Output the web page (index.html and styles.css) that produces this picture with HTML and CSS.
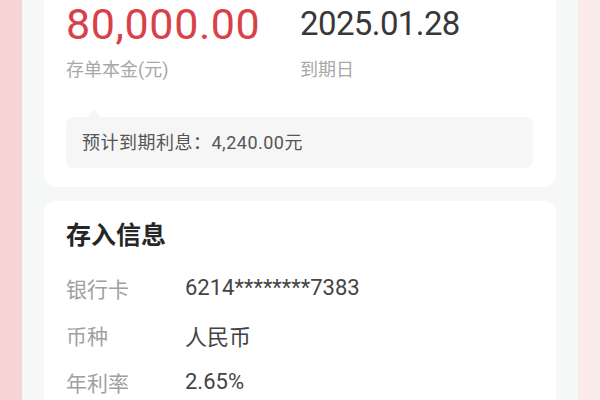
FILE: index.html
```html
<!DOCTYPE html>
<html lang="zh-CN">
<head>
<meta charset="utf-8">
<link rel="stylesheet" href="styles.css">
</head>
<body>
<div class="page">
  <div class="strip strip-left"></div>
  <main class="main">
    <section class="card card-summary">
      <div class="figures">
        <div class="fig fig-amount">
          <div class="amount">80,000.00</div>
          <div class="fig-label">存单本金(元)</div>
        </div>
        <div class="fig fig-date">
          <div class="date">2025.01.28</div>
          <div class="fig-label">到期日</div>
        </div>
      </div>
      <div class="interest">
        <span class="notch"></span>
        预计到期利息：4,240.00元
      </div>
    </section>
    <section class="card card-info">
      <h2 class="title">存入信息</h2>
      <div class="row"><span class="row-label">银行卡</span><span class="row-value">6214********7383</span></div>
      <div class="row"><span class="row-label">币种</span><span class="row-value">人民币</span></div>
      <div class="row"><span class="row-label">年利率</span><span class="row-value">2.65%</span></div>
    </section>
  </main>
  <div class="strip strip-right"></div>
</div>
</body>
</html>
```

FILE: styles.css
```css
* { box-sizing: border-box; }
html, body {
  margin: 0;
  padding: 0;
  width: 600px;
  height: 400px;
  overflow: hidden;
  font-family: Roboto, "Noto Sans CJK SC", sans-serif;
}
.page {
  display: flex;
  width: 600px;
  height: 400px;
}
.strip { width: 22px; flex: none; }
.strip-left { background: #f6d4d4; }
.strip-right { background: #fbeaea; }
.main {
  flex: 1;
  background: #f6f7f7;
  padding: 0 22px;
  display: flex;
  flex-direction: column;
  gap: 14px;
}
.card {
  background: #ffffff;
  border-radius: 12px;
  padding: 0 23px 0 22px;
}
.card-summary {
  margin-top: -12px;
  padding-top: 12px;
  padding-bottom: 19px;
}
.figures {
  display: flex;
}
.fig-amount { width: 234px; }
.amount {
  font-size: 43px;
  line-height: 48px;
  color: #d8414a;
  letter-spacing: 0.6px;
}
.date {
  font-size: 33px;
  line-height: 48px;
  color: #383838;
  letter-spacing: -0.6px;
}
.fig-label {
  margin-top: 10px;
  font-size: 18px;
  line-height: 24px;
  color: #a8a8a8;
}
.interest {
  position: relative;
  margin-top: 35px;
  background: #f6f6f6;
  border-radius: 8px;
  padding: 14px 16px;
  font-size: 18px;
  line-height: 23px;
  letter-spacing: 0.5px;
  color: #555555;
}
.notch {
  position: absolute;
  left: 22px;
  top: -8px;
  width: 0;
  height: 0;
  border-left: 6px solid transparent;
  border-right: 6px solid transparent;
  border-bottom: 8px solid #f6f6f6;
}
.card-info {
  padding-top: 20px;
  padding-bottom: 10px;
}
.title {
  margin: 0 0 13px 0;
  font-size: 25px;
  line-height: 30px;
  font-weight: 700;
  color: #262626;
}
.row {
  display: flex;
  align-items: center;
  height: 47px;
}
.row-label {
  width: 119px;
  font-size: 21px;
  color: #a0a0a0;
}
.row-value {
  font-size: 22px;
  color: #444444;
}
```
